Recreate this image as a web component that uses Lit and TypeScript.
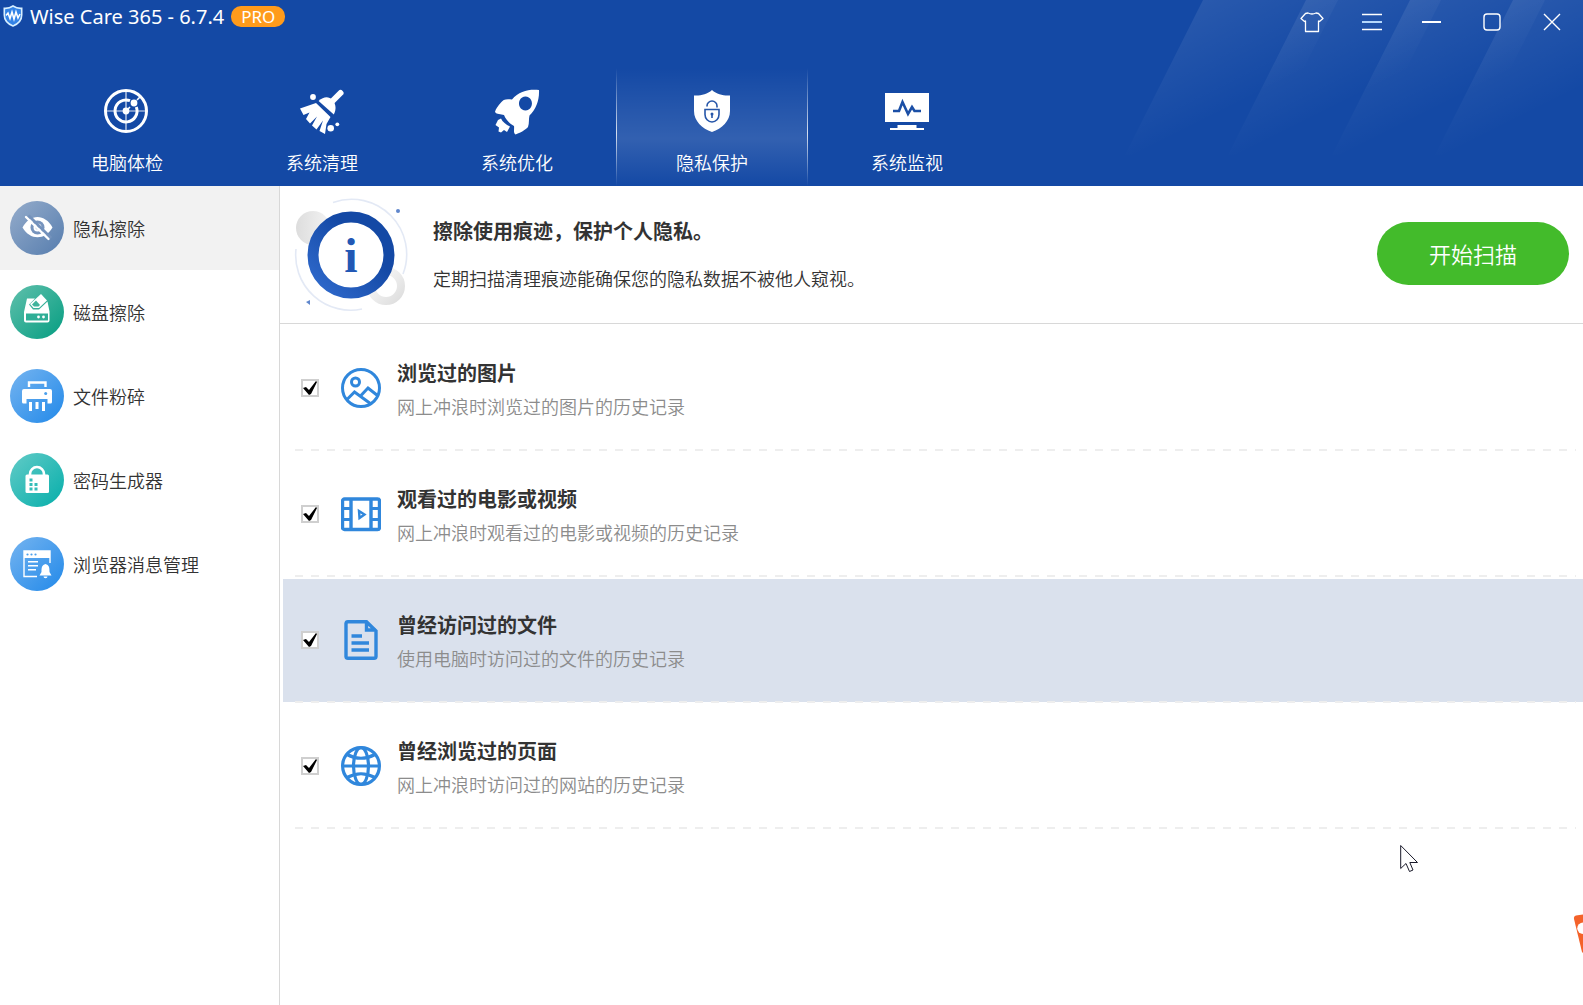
import { LitElement, html, svg, css } from "lit";
import { customElement, property, state } from "lit/decorators.js";
import { classMap } from "lit/directives/class-map.js";

const toolIcons = [
  svg`<g transform="translate(-1 0)"><g fill="none" stroke="#fff"><circle cx="24" cy="24" r="20.5" stroke-width="3"/><path d="M28 13.7A11 11 0 1 0 34.3 20" stroke-width="3"/><path d="M24 3V45M3 24H45" stroke-width="1.2" opacity=".85"/><path d="M24 24L28 20M35 13L39 9" stroke-width="1.6"/></g><circle cx="24" cy="24" r="3.4" fill="#fff"/><circle cx="32" cy="16" r="3.4" fill="#fff"/></g>`,
  svg`<path d="M42.5 6L31 17.5" stroke="#fff" stroke-width="6" stroke-linecap="round"/><g fill="#fff"><path d="M20.6 14C26 9 31 9.500 34.500 13C38 17 38.500 22.500 35.800 27.500Z"/><path d="M18 16L2 21.500L5.500 28L11.500 25.500L8 32L12 36.500L19 29.500L14 38.500L18.500 42.500L25 33.500L21.500 44L27 47L28.500 37L32.500 30Z"/><circle cx="15" cy="10" r="2.900"/><circle cx="32.700" cy="41.300" r="3.300"/><circle cx="39.300" cy="37.300" r="1.900"/></g>`,
  svg`<path fill="#fff" fill-rule="evenodd" d="M46 3C36 2 26 4 19 12.500C13 11.500 10 12.500 8 15.500C5 19 2.500 22 2 25C3.500 27.500 8 27 11 28C13 33 17 37 21 39C21.500 42 20 46 22.500 47.500C27 46 33 42.500 35 40C36.500 36 35.500 32 36.500 28.500C43 22 46.500 13 46 3ZM32.500 9.500A6.500 7 0 1 1 32.400 9.500Z"/><path fill="#fff" d="M8 31.500C9.500 35 13 37.500 17 39.500L14 45L11 43L8 45.500L5.500 44.500L6 40.500L2.500 38L5 33Z"/>`,
  svg`<path fill="#fff" d="M24 3C19 7.500 12 9 6 8.500V24C6 34 14 41.500 24 45C34 41.500 42 34 42 24V8.500C36 9 29 7.500 24 3Z"/><g fill="none" stroke="#2656a9" stroke-width="1.600"><path d="M19 19.500V19A5 5 0 0 1 29 19V20.500M17 22.500H31V27.500A7 7.500 0 0 1 17 27.500Z"/><path d="M24 27.500V31"/></g><circle cx="24" cy="27" r="1.500" fill="#2656a9"/>`,
  svg`<path fill="#fff" d="M2 6H46V35H2ZM14.500 38H33.500V41H41V43H7V41H14.500Z"/><path fill="none" stroke="#1b4fa6" stroke-width="2.600" d="M10 24H16L19.500 15L25 27L29 20L31.500 24H38"/>`,
];

const sideIcons = [
  svg`<path fill="#fff" d="M12.500 26.500C20 12.500 35 12.500 42.500 26.500C35 39.500 20 39.500 12.500 26.500Z"/><circle cx="27.500" cy="26.500" r="7" fill="#7794bd"/><circle cx="27.500" cy="26.500" r="3" fill="none" stroke="#fff" stroke-width="2"/><path d="M18.500 14.500L41 37" stroke="#7492bc" stroke-width="3"/><path d="M16 16L38.500 38" stroke="#fff" stroke-width="2.400" stroke-linecap="round"/>`,
  svg`<path fill="#fff" d="M17 13.500H25L19 19.500L23 24.500H29L37.500 16.500L39.500 26.500V35.500A2 2 0 0 1 37.500 37.500H16A2 2 0 0 1 14 35.500V27Z"/><path fill="#2fae96" d="M16 28.500H38V35.500H16Z"/><circle cx="28.500" cy="32" r="1.400" fill="#fff"/><circle cx="33.500" cy="32" r="1.400" fill="#fff"/><path fill="#fff" d="M31 9L37 15.500L29 23H23.500L20 19Z"/><path fill="#3fb49c" d="M26 15.500L30 20L28.500 21.500H24L22 19.500Z"/>`,
  svg`<path fill="none" stroke="#fff" stroke-width="2.400" d="M19 18V13.500H35.500V18"/><path fill="#fff" d="M14 20H40A2 2 0 0 1 42 22V33A1.500 1.500 0 0 1 40.500 34.500H37.500V30H16.500V34.500H13.500A1.500 1.500 0 0 1 12 33V22A2 2 0 0 1 14 20Z"/><circle cx="35.700" cy="24.500" r="1.500" fill="#4a9fec"/><path stroke="#fff" stroke-width="3" d="M20.500 33V42M27 33V40M33.500 33V42"/>`,
  svg`<path fill="none" stroke="#fff" stroke-width="2.600" d="M20 23V21A7 7 0 0 1 34 21V23"/><rect x="15.500" y="21.500" width="23.500" height="18.500" rx="1.500" fill="#fff"/><path fill="#34bdb9" d="M19.500 25.500H22.500V28.500H19.500ZM19.500 30H22.500V33H19.500ZM24.500 30H27.500V33H24.500ZM19.500 34.500H22.500V37.500H19.500ZM24.500 34.500H27.500V37.500H24.500Z"/>`,
  svg`<path fill="none" stroke="#fff" stroke-width="1.400" d="M40 26V14H14V39.500H27"/><path fill="#fff" d="M14 14H40V21H14Z"/><g fill="#4a9fec"><circle cx="17.500" cy="17.500" r="1.100"/><circle cx="21.500" cy="17.500" r="1.100"/><circle cx="25.500" cy="17.500" r="1.100"/></g><path stroke="#fff" stroke-width="1.400" d="M18 24.700H28M18 28.700H28M18 32.700H26"/><path fill="#fff" d="M35.500 27C39 28 39.500 30 39.500 35L41.500 38.500H29.500L31.500 35C31.500 30 32 28 35.500 27ZM33.500 39.500H37.500A2 1.800 0 0 1 33.500 39.500Z"/>`,
];

const rowIcons = [
  svg`<g fill="none" stroke="#3087dc" stroke-width="3"><circle cx="20" cy="20" r="18.500"/><circle cx="14.500" cy="14" r="4" stroke-width="3"/><path d="M6 31.500L13.500 24L30 36M19.500 28L27 20L36.500 27.500"/></g>`,
  svg`<g fill="none" stroke="#3087dc" stroke-width="3"><rect x="1.500" y="5" width="37" height="30.500" rx="2" stroke-width="3.400"/><path d="M10 5V35.500M30 5V35.500" stroke-width="3.400"/><path d="M2 14.500H10M2 25.500H10M30 14.500H38M30 25.500H38" stroke-width="3"/><path d="M18 17L23.500 20.500L18.500 24Z" stroke-width="2.400"/></g>`,
  svg`<g fill="none" stroke="#3087dc" stroke-width="3.400"><path d="M25.500 1.700H7A2 2 0 0 0 5 3.500V36.500A2 2 0 0 0 7 38.300H33A2 2 0 0 0 35 36.500V11ZM25.500 1.500V10H35"/><path d="M10.500 16H21M10.500 23H28M10.500 30H28" stroke-width="3.600"/></g>`,
  svg`<g fill="none" stroke="#3087dc" stroke-width="3.200"><circle cx="20" cy="20" r="18.400"/><ellipse cx="20" cy="20" rx="7.500" ry="18.400"/><path d="M1.500 20H38.500M6 8.500Q20 16 34 8.500M6 31.500Q20 24 34 31.500"/></g>`,
];

const tools = ["电脑体检", "系统清理", "系统优化", "隐私保护", "系统监视"];
const sections = ["隐私擦除", "磁盘擦除", "文件粉碎", "密码生成器", "浏览器消息管理"];
const traces = [
  { title: "浏览过的图片", note: "网上冲浪时浏览过的图片的历史记录" },
  { title: "观看过的电影或视频", note: "网上冲浪时观看过的电影或视频的历史记录" },
  { title: "曾经访问过的文件", note: "使用电脑时访问过的文件的历史记录" },
  { title: "曾经浏览过的页面", note: "网上冲浪时访问过的网站的历史记录" },
];

const reset = css`
  * { box-sizing: border-box; margin: 0; padding: 0; }
  button { border: 0; background: none; font: inherit; color: inherit; cursor: default; }
  svg { display: block; flex: none; }
  ul { list-style: none; }
`;

@customElement("app-header")
class AppHeader extends LitElement {
  @property({ type: Number }) current = 3;

  static styles = [reset, css`
    :host { display: block; position: relative; height: 186px; color: #fff; background: #1449a5; overflow: hidden; }
    .rays { position: absolute; top: 0; right: 0; }
    .bar { position: relative; display: flex; justify-content: space-between; height: 44px; padding-right: 1px; }
    .brand { display: flex; align-items: center; height: 32px; padding-left: 3px; gap: 7px; }
    h1 { padding-top: 2px; font: 400 20px/24px "Noto Sans", "Open Sans", sans-serif; white-space: nowrap; }
    .pro { padding: 0 10px; border-radius: 10px; background: #ff9b1c; font: 400 17px/21px "Noto Sans", sans-serif; }
    .controls { display: flex; }
    .controls button { display: flex; align-items: center; justify-content: center; width: 60px; height: 44px; }
    nav { position: relative; display: flex; gap: 3px; margin-top: 24px; padding-left: 31px; }
    .tool { display: flex; flex-direction: column; align-items: center; gap: 15px; width: 192px; height: 118px; padding-top: 19px; font-size: 18px; line-height: 24px; }
    .tool.on {
      background:
        linear-gradient(transparent, rgba(255,255,255,.8) 55%, transparent) left / 1px 100% no-repeat,
        linear-gradient(transparent, rgba(255,255,255,.8) 55%, transparent) right / 1px 100% no-repeat,
        linear-gradient(transparent, rgba(255,255,255,.13) 60%, transparent);
    }
  `];

  pick(i: number) {
    this.dispatchEvent(new CustomEvent("pick", { detail: i }));
  }

  render() {
    return html`
      <svg class="rays" width="463" height="160" viewBox="0 0 463 160" aria-hidden="true">
        <defs><linearGradient id="ray" x1="83" y1="0" x2="132" y2="98" gradientUnits="userSpaceOnUse">
          <stop offset="0" stop-color="#fff" stop-opacity=".09"/><stop offset="1" stop-color="#fff" stop-opacity="0"/>
        </linearGradient></defs>
        ${[0, 103, 207, 310].map((x) => svg`<path transform="translate(${x} 0)" fill="url(#ray)" d="M83 0H218L140 155H5Z"/>`)}
      </svg>
      <div class="bar">
        <div class="brand">
          <svg width="20" height="22" viewBox="0 0 20 22" aria-hidden="true">
            <path d="M10 1C7 3 4 3.500 1.300 3.300V10C1.300 16 5 19 10 21C15 19 18.700 16 18.700 10V3.300C16 3.500 13 3 10 1Z" fill="#3383e6" stroke="#d7efff" stroke-width="1.600"/>
            <path d="M3 10.500L5 8L7 13.500L9 7L11 14L13 7L15 13L17 9" fill="none" stroke="#fff" stroke-width="1.600"/>
          </svg>
          <h1>Wise Care 365 - 6.7.4</h1>
          <span class="pro">PRO</span>
        </div>
        <div class="controls">
          <button aria-label="皮肤"><svg width="24" height="22" viewBox="0 0 24 22" fill="none" stroke="#fff" stroke-width="1.300" stroke-linejoin="round"><path d="M8 2Q12 4 16 2L18.500 2.500L23 7.500L19.500 10.500L18.500 10V20.500H5.500V10L4.500 10.500L1 7.500L5.500 2.500Z"/></svg></button>
          <button aria-label="菜单"><svg width="20" height="18" viewBox="0 0 20 18"><path stroke="#fff" stroke-width="1.400" d="M0 1.500H20M0 16.500H20"/><path stroke="#b5d7fb" stroke-width="2" d="M0 9H20"/></svg></button>
          <button aria-label="最小化"><svg width="20" height="4" viewBox="0 0 20 4"><path stroke="#fff" stroke-width="2" d="M0 2H19"/></svg></button>
          <button aria-label="最大化"><svg width="18" height="18" viewBox="0 0 18 18"><rect x="1" y="1" width="16" height="16" rx="3" fill="none" stroke="#fff" stroke-width="1.400"/></svg></button>
          <button aria-label="关闭"><svg width="18" height="18" viewBox="0 0 18 18"><path stroke="#fff" stroke-width="1.400" d="M1 1L17 17M17 1L1 17"/></svg></button>
        </div>
      </div>
      <nav>
        ${tools.map((name, i) => html`
          <button class=${classMap({ tool: true, on: i === this.current })} @click=${() => this.pick(i)}>
            <svg width="48" height="48" viewBox="0 0 48 48" aria-hidden="true">${toolIcons[i]}</svg>
            <span>${name}</span>
          </button>`)}
      </nav>`;
  }
}

@customElement("app-sidebar")
class AppSidebar extends LitElement {
  @state() current = 0;

  static styles = [reset, css`
    :host { display: block; border-right: 1px solid #d8d8d8; background: #fff; }
    .item { display: flex; align-items: center; gap: 9px; width: 100%; height: 84px; padding-left: 10px; font-size: 18px; line-height: 24px; text-align: left; }
    .item.on { background: #f2f2f2; }
    .disc { width: 54px; height: 54px; border-radius: 50%; flex: none; }
    .c0 { background: linear-gradient(135deg, #95accb, #567dae); }
    .c1 { background: linear-gradient(135deg, #60c0ac, #059d81); }
    .c2, .c4 { background: linear-gradient(135deg, #75b4f0, #2289e9); }
    .c3 { background: linear-gradient(135deg, #62cbc7, #05aeaa); }
  `];

  render() {
    return html`<ul>${sections.map((name, i) => html`
      <li><button class=${classMap({ item: true, on: i === this.current })} @click=${() => (this.current = i)}>
        <span class="disc c${i}"><svg width="54" height="54" viewBox="0 0 54 54" aria-hidden="true">${sideIcons[i]}</svg></span>
        <span>${name}</span>
      </button></li>`)}</ul>`;
  }
}

@customElement("privacy-panel")
class PrivacyPanel extends LitElement {
  @state() active = 2;

  static styles = [reset, css`
    :host { display: block; background: #fff; }
    .intro { display: flex; align-items: center; height: 138px; padding: 0 14px 2px 11px; border-bottom: 1px solid #d8d8d8; }
    .copy { flex: 1; padding-left: 22px; }
    h2 { font-size: 20px; line-height: 28px; font-weight: 700; }
    .copy p { margin-top: 20px; font-size: 18px; line-height: 26px; }
    .scan { width: 192px; height: 63px; padding-bottom: 2px; border-radius: 32px; background: #43bb2b; color: #fff; font-size: 22px; line-height: 32px; }
    .list { padding-top: 1px; }
    .list li { margin-left: 3px; border-top: 2px solid transparent; }
    .list li.on { background: linear-gradient(#dae1ed, #dae1ed) top / 100% calc(100% - 1px) no-repeat padding-box; }
    .row { display: flex; align-items: center; height: 122px; padding-left: 18px; }
    .box { appearance: none; flex: none; width: 18px; height: 18px; border: 2px solid #cfcfcf; background: #fff; }
    .box:checked::before { content: ""; display: block; width: 14px; height: 14px; background: #000; clip-path: polygon(0 7px, 3px 6px, 6px 9px, 13px 0, 14px 1px, 8px 13px, 6px 14px); }
    .pic { margin: 0 16px 0 22px; }
    .words { padding-top: 2px; }
    h3 { font-size: 20px; line-height: 28px; font-weight: 700; }
    .note { display: block; margin-top: 6px; font-size: 18px; line-height: 26px; color: #8c8c8c; }
    .rule { height: 2px; margin: 0 7px 0 12px; background: repeating-linear-gradient(90deg, #eee 0 8px, transparent 8px 16px); }
  `];

  render() {
    return html`
      <section class="intro">
        <svg width="120" height="120" viewBox="0 -1 120 120" aria-hidden="true">
          <defs>
            <linearGradient id="ring" x1="0" y1="1" x2="1" y2="0"><stop offset=".1" stop-color="#2c66c8"/><stop offset=".65" stop-color="#1449a5"/></linearGradient>
            <linearGradient id="ball"><stop offset="0" stop-color="#ddd"/><stop offset="1" stop-color="#f3f3f3"/></linearGradient>
            <linearGradient id="hoop" x1="0" y1="0" x2="1" y2="1"><stop offset=".1" stop-color="#f8f8f8"/><stop offset="1" stop-color="#dedede"/></linearGradient>
          </defs>
          <g fill="none" stroke="#e3e9f5" stroke-width="1.600"><path d="M42 7.500A55 55 0 0 1 112 79"/><path d="M5 54A55 55 0 0 0 71 114"/></g>
          <circle cx="22" cy="33" r="17" fill="url(#ball)"/>
          <circle cx="95" cy="91" r="15" fill="none" stroke="url(#hoop)" stroke-width="8"/>
          <circle cx="60" cy="60" r="38" fill="#fff" stroke="url(#ring)" stroke-width="11"/>
          <text x="60" y="77" text-anchor="middle" font-family="Liberation Serif, serif" font-weight="700" font-size="48" fill="#2258b5">i</text>
          <circle cx="107" cy="16" r="2" fill="#5f86cc"/><path d="M15 107L19 105V110Z" fill="#5f86cc"/>
        </svg>
        <div class="copy">
          <h2>擦除使用痕迹，保护个人隐私。</h2>
          <p>定期扫描清理痕迹能确保您的隐私数据不被他人窥视。</p>
        </div>
        <button class="scan">开始扫描</button>
      </section>
      <ul class="list">
        ${traces.map((t, i) => html`
          <li class=${classMap({ on: i === this.active })} @mouseenter=${() => (this.active = i)}>
            <label class="row" for="trace${i}">
              <input class="box" type="checkbox" id="trace${i}" checked>
              <svg class="pic" width="40" height="40" viewBox="0 0 40 40" aria-hidden="true">${rowIcons[i]}</svg>
              <span class="words"><h3>${t.title}</h3><span class="note">${t.note}</span></span>
            </label>
            <div class="rule"></div>
          </li>`)}
      </ul>`;
  }
}

@customElement("app-root")
class AppRoot extends LitElement {
  @state() tool = 3;

  static styles = [reset, css`
    :host { display: flex; flex-direction: column; position: relative; min-height: 100vh; overflow: hidden; background: #fff; color: #333; font-family: "Noto Sans CJK SC", sans-serif; font-weight: 350; }
    .body { display: grid; grid-template-columns: 280px 1fr; flex: 1; }
    .cursor { position: absolute; left: 1400px; top: 844px; }
    .sticker { position: absolute; right: 0; top: 913px; }
  `];

  render() {
    return html`
      <app-header .current=${this.tool} @pick=${(e: CustomEvent) => (this.tool = e.detail)}></app-header>
      <div class="body"><app-sidebar></app-sidebar><privacy-panel></privacy-panel></div>
      <svg class="sticker" width="10" height="42" viewBox="0 0 10 42" aria-hidden="true"><path d="M10 1.500L3 2.500Q.5 3 1 6L9 39L10 40Z" fill="#f4622a"/><path d="M10 9.500A5.500 5.500 0 0 0 10 21Z" fill="#fff"/></svg>
      <svg class="cursor" width="19" height="29" viewBox="0 0 19 29" aria-hidden="true"><path d="M.7 1.500V24.500L6 19.500L9.500 27.500L13 26L9.800 18.500H17.500Z" fill="#fff" stroke="#1a1a2a" stroke-width="1"/></svg>`;
  }
}
